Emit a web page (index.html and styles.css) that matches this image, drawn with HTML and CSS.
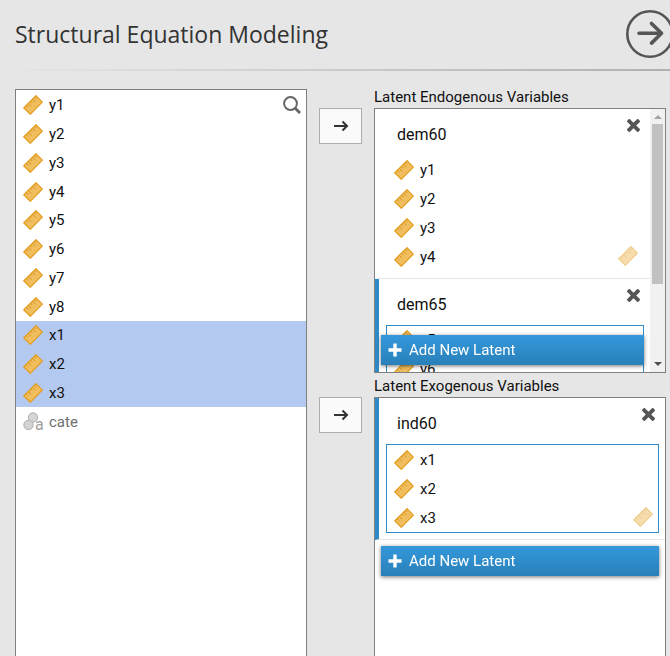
FILE: index.html
```html
<!DOCTYPE html>
<html lang="en">
<head>
<meta charset="utf-8">
<title>Structural Equation Modeling</title>
<link rel="stylesheet" href="styles.css">
</head>
<body>
<svg class="defs" aria-hidden="true">
  <symbol id="ruler" viewBox="0 0 20 20">
    <path d="M13 .7 19.3 7.2 7.3 19.3.7 12.8Z" fill="#f0bd5f" stroke="#e39d1c" stroke-width="1.2"/>
    <path d="M3.3 10.7 5 12.4M5.4 8.5 8.2 11.3M7.6 6.3 9.3 8M9.6 4.3 12.4 7.1M11.6 2.3 13.3 4" fill="none" stroke="#d8921a" stroke-width="1"/>
  </symbol>
  <symbol id="arrow" viewBox="0 0 16 16">
    <path d="M1 8H14M9.5 3.5 14 8 9.5 12.5" fill="none" stroke="#333" stroke-width="2"/>
  </symbol>
  <symbol id="cross" viewBox="0 0 14 14">
    <path d="M2.5 2.5 11.5 11.5M11.5 2.5 2.5 11.5" fill="none" stroke="#555" stroke-width="4.2" stroke-linecap="square"/>
  </symbol>
  <symbol id="plus" viewBox="0 0 14 14">
    <path d="M7 .5V13.5M.5 7H13.5" fill="none" stroke="#fff" stroke-width="3.4"/>
  </symbol>
</svg>

<header class="header">
  <h1>Structural Equation Modeling</h1>
  <button class="hide-options" type="button" aria-label="Hide options">
    <svg viewBox="0 0 48 48"><circle cx="24" cy="24" r="22.7" fill="none" stroke="#555" stroke-width="2.6"/><path d="M13 23.3H35M25.5 13.5 35.5 23.3 25.5 33.1" fill="none" stroke="#555" stroke-width="3.6" stroke-linecap="round" stroke-linejoin="round"/></svg>
  </button>
</header>

<main class="options">
  <section class="panel supplier" aria-label="Variables">
    <button class="search" type="button" aria-label="Search">
      <svg viewBox="0 0 18 18"><circle cx="7.5" cy="7.5" r="6.4" fill="none" stroke="#666" stroke-width="2"/><path d="M12 12 17 17" stroke="#666" stroke-width="2.8"/></svg>
    </button>
    <ul class="vars supplier-list">
      <li><svg><use href="#ruler"/></svg>y1</li>
      <li><svg><use href="#ruler"/></svg>y2</li>
      <li><svg><use href="#ruler"/></svg>y3</li>
      <li><svg><use href="#ruler"/></svg>y4</li>
      <li><svg><use href="#ruler"/></svg>y5</li>
      <li><svg><use href="#ruler"/></svg>y6</li>
      <li><svg><use href="#ruler"/></svg>y7</li>
      <li><svg><use href="#ruler"/></svg>y8</li>
      <li class="selected"><svg><use href="#ruler"/></svg>x1</li>
      <li class="selected"><svg><use href="#ruler"/></svg>x2</li>
      <li class="selected"><svg><use href="#ruler"/></svg>x3</li>
      <li class="disabled"><svg class="nominal" viewBox="0 0 22 20"><circle cx="10" cy="5.5" r="4.7" fill="#d4d4d4" stroke="#b0b0b0"/><circle cx="5.5" cy="13" r="4.7" fill="#d4d4d4" stroke="#b0b0b0"/><text x="12" y="18">a</text></svg>cate</li>
    </ul>
  </section>

  <button class="assign" type="button" aria-label="Assign to endogenous"><svg><use href="#arrow"/></svg></button>

  <section class="target">
    <h2>Latent Endogenous Variables</h2>
    <div class="panel scroll-panel">
      <div class="groups">
        <div class="group">
          <div class="group-head">
            <input type="text" value="dem60" aria-label="Latent name">
            <button type="button" class="remove" aria-label="Remove dem60"><svg><use href="#cross"/></svg></button>
          </div>
          <div class="box">
            <ul class="vars four">
              <li><svg><use href="#ruler"/></svg>y1</li>
              <li><svg><use href="#ruler"/></svg>y2</li>
              <li><svg><use href="#ruler"/></svg>y3</li>
              <li><svg><use href="#ruler"/></svg>y4</li>
            </ul>
            <svg class="permitted"><use href="#ruler"/></svg>
          </div>
        </div>
        <div class="group active">
          <div class="group-head">
            <input type="text" value="dem65" aria-label="Latent name">
            <button type="button" class="remove" aria-label="Remove dem65"><svg><use href="#cross"/></svg></button>
          </div>
          <div class="box">
            <ul class="vars four">
              <li><svg><use href="#ruler"/></svg>y5</li>
              <li><svg><use href="#ruler"/></svg>y6</li>
            </ul>
          </div>
        </div>
        <button class="add" type="button"><svg><use href="#plus"/></svg>Add New Latent</button>
      </div>
      <div class="scrollbar" aria-hidden="true">
        <svg viewBox="0 0 8 4"><path d="M0 4 4 0 8 4Z" fill="#a3a3a3"/></svg>
        <div class="thumb"></div>
        <svg viewBox="0 0 8 4"><path d="M0 0 4 4 8 0Z" fill="#505050"/></svg>
      </div>
    </div>
  </section>

  <button class="assign" type="button" aria-label="Assign to exogenous"><svg><use href="#arrow"/></svg></button>

  <section class="target">
    <h2>Latent Exogenous Variables</h2>
    <div class="panel open-panel">
      <div class="group active">
        <div class="group-head">
          <input type="text" value="ind60" aria-label="Latent name">
          <button type="button" class="remove" aria-label="Remove ind60"><svg><use href="#cross"/></svg></button>
        </div>
        <div class="box">
          <ul class="vars three">
            <li><svg><use href="#ruler"/></svg>x1</li>
            <li><svg><use href="#ruler"/></svg>x2</li>
            <li><svg><use href="#ruler"/></svg>x3</li>
          </ul>
          <svg class="permitted"><use href="#ruler"/></svg>
        </div>
      </div>
      <button class="add" type="button"><svg><use href="#plus"/></svg>Add New Latent</button>
    </div>
  </section>
</main>
</body>
</html>
```
FILE: styles.css
```css
* { box-sizing: border-box; }

body {
  margin: 0;
  height: 100vh;
  overflow: hidden;
  display: flex;
  flex-direction: column;
  background: #e6e6e6;
  color: #111;
  font-family: Roboto, sans-serif;
  font-size: 15px;
}

button {
  padding: 0;
  border: 0;
  background: none;
  font: inherit;
}

svg { display: block; }

.defs {
  position: absolute;
  width: 0;
  height: 0;
}

.header {
  display: flex;
  justify-content: space-between;
  align-items: center;
  height: 71px;
  padding: 0 0 2px 15px;
  border-bottom: 2px solid;
  border-image: linear-gradient(to right, #e6e6e6, #b0b0b0) 1;
}

.header h1 {
  margin: 0;
  color: #333;
  font: 400 23px/32px "Open Sans", sans-serif;
}

.hide-options {
  flex: none;
  margin-right: -4px;
}

.hide-options svg {
  width: 48px;
  height: 48px;
}

.options {
  flex: 1;
  display: grid;
  grid-template-columns: 1fr 67px 1fr;
  grid-template-rows: auto 1fr;
  row-gap: 5px;
  padding: 18px 4px 0 15px;
}

.panel {
  border: 1px solid #808080;
  background: #fff;
}

.supplier {
  grid-row: span 2;
  position: relative;
  padding-top: 1px;
  border-bottom: 0;
}

.search {
  position: absolute;
  top: 6px;
  right: 5px;
}

.search svg {
  width: 18px;
  height: 18px;
}

.vars {
  display: grid;
  margin: 0;
  padding: 0;
  list-style: none;
}

.vars li {
  display: flex;
  align-items: center;
  gap: 6px;
  padding-left: 7px;
}

.vars svg {
  width: 20px;
  height: 20px;
}

.supplier-list {
  grid-template-rows: repeat(12, 1fr);
  height: 345px;
}

.four {
  grid-template-rows: repeat(4, 1fr);
  height: 115px;
}

.three {
  grid-template-rows: repeat(3, 1fr);
  height: 87px;
}

.vars .selected { background: #b3c9ef; }

.vars .disabled {
  gap: 4px;
  color: #707070;
}

.vars .nominal {
  width: 22px;
  overflow: visible;
}

.nominal text {
  fill: #a0a0a0;
  font: 16px Roboto, sans-serif;
}

.assign {
  display: grid;
  place-items: center;
  align-self: start;
  justify-self: center;
  width: 43px;
  height: 36px;
  margin-top: 19px;
  border: 1px solid #adadad;
  background: #fafafa;
}

.assign svg {
  width: 16px;
  height: 16px;
}

.target {
  display: flex;
  flex-direction: column;
  min-width: 0;
}

.target h2 {
  margin: 0;
  font-size: 15px;
  font-weight: 400;
  line-height: 17px;
  padding-bottom: 2px;
}

.scroll-panel {
  display: flex;
  height: 265px;
}

.groups {
  flex: 1;
  min-width: 0;
  overflow: hidden;
}

.open-panel {
  flex: 1;
  border-bottom: 0;
}

.group {
  padding: 0 6px 6px 7px;
  border-left: 4px solid transparent;
  border-bottom: 1px solid #e6e6e6;
}

.group.active { border-left-color: #2f8bc8; }

.group-head {
  display: flex;
  justify-content: space-between;
  height: 46px;
}

.group-head input {
  flex: 1;
  min-width: 0;
  height: 30px;
  margin-top: 10px;
  padding: 0 0 0 11px;
  border: 0;
  background: none;
  color: #111;
  font: 16px Roboto, sans-serif;
}

.remove {
  align-self: flex-start;
  margin: 10px 4px 0 0;
}

.remove svg {
  width: 13px;
  height: 13px;
}

.box {
  position: relative;
  border: 1px solid transparent;
}

.active .box { border-color: #2f8bc8; }

.permitted {
  position: absolute;
  right: 5px;
  bottom: 5px;
  width: 20px;
  height: 20px;
  opacity: 0.5;
}

.add {
  position: sticky;
  bottom: 7px;
  display: flex;
  align-items: center;
  gap: 7px;
  width: calc(100% - 12px);
  height: 30px;
  margin: 6px;
  padding-left: 7px;
  background: linear-gradient(#3498db, #2980b9);
  box-shadow: 0 1px 4px rgba(0, 0, 0, 0.55);
  color: #fff;
  font-size: 15px;
}

.add svg {
  width: 14px;
  height: 14px;
}

.scrollbar {
  display: flex;
  flex-direction: column;
  align-items: center;
  width: 15px;
  padding: 6px 0;
  background: #f1f1f1;
}

.scrollbar svg {
  width: 8px;
  height: 4px;
}

.thumb {
  width: 11px;
  height: 160px;
  margin: 5px 0 auto;
  background: #c1c1c1;
}
```
